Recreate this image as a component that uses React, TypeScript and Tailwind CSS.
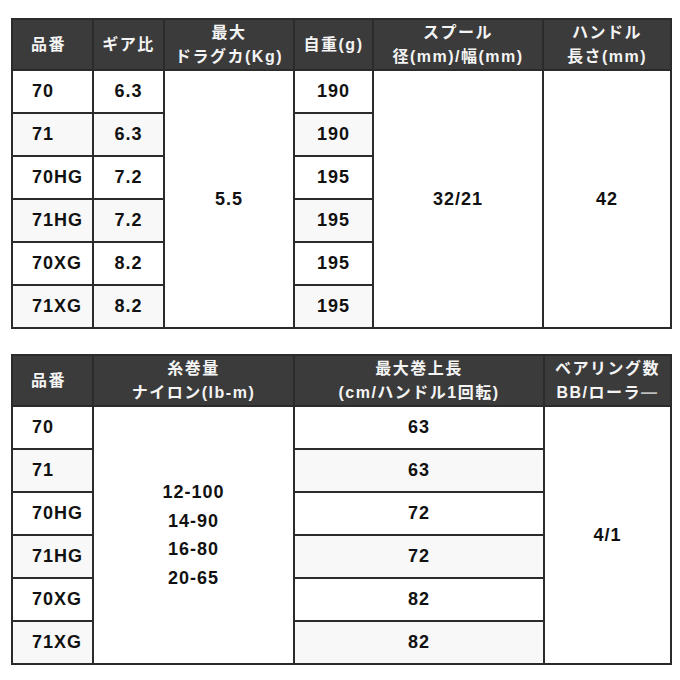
const font = { fontFamily: '"Liberation Sans", "Noto Sans CJK JP", sans-serif' };

const models = ['70', '71', '70HG', '71HG', '70XG', '71XG'];
const gear = ['6.3', '6.3', '7.2', '7.2', '8.2', '8.2'];
const weight = ['190', '190', '195', '195', '195', '195'];
const retrieve = ['63', '63', '72', '72', '82', '82'];

const th =
  'border-2 border-[#2b2b2b] bg-[#3b3b3b] text-[#f4f4f4] font-bold text-[16px] leading-[24px] tracking-[1.5px] text-center align-middle p-0';
const td =
  'border-2 border-[#2b2b2b] text-[#111] font-bold text-[18px] tracking-[1px] text-center align-middle p-0';

function rowBg(i: number) {
  return i % 2 === 1 ? 'bg-[#f8f8f8]' : 'bg-white';
}

export default function App() {
  return (
    <div className="w-[680px] h-[680px] bg-white pt-[18px] pl-[11px]" style={font}>
      <table className="border-collapse w-[659px] table-fixed">
        <colgroup>
          <col className="w-[81px]" />
          <col className="w-[71px]" />
          <col className="w-[130px]" />
          <col className="w-[79px]" />
          <col className="w-[170px]" />
          <col className="w-[128px]" />
        </colgroup>
        <thead>
          <tr className="h-[51px]">
            <th className={th + ' text-left pl-[18px]'}>品番</th>
            <th className={th}>ギア比</th>
            <th className={th}>
              最大
              <br />
              ドラグカ(Kg)
            </th>
            <th className={th}>自重(g)</th>
            <th className={th}>
              スプール
              <br />
              径(mm)/幅(mm)
            </th>
            <th className={th}>
              ハンドル
              <br />
              長さ(mm)
            </th>
          </tr>
        </thead>
        <tbody>
          {models.map((m, i) => (
            <tr key={m} className={'h-[43px] ' + rowBg(i)}>
              <td className={td + ' text-left pl-[19px]'}>{m}</td>
              <td className={td}>{gear[i]}</td>
              {i === 0 && (
                <td rowSpan={6} className={td + ' bg-white'}>
                  5.5
                </td>
              )}
              <td className={td}>{weight[i]}</td>
              {i === 0 && (
                <>
                  <td rowSpan={6} className={td + ' bg-white'}>
                    32/21
                  </td>
                  <td rowSpan={6} className={td + ' bg-white'}>
                    42
                  </td>
                </>
              )}
            </tr>
          ))}
        </tbody>
      </table>

      <table className="border-collapse w-[659px] table-fixed mt-[25px]">
        <colgroup>
          <col className="w-[81px]" />
          <col className="w-[201px]" />
          <col className="w-[250px]" />
          <col className="w-[127px]" />
        </colgroup>
        <thead>
          <tr className="h-[51px]">
            <th className={th + ' text-left pl-[18px]'}>品番</th>
            <th className={th}>
              糸巻量
              <br />
              ナイロン(lb-m)
            </th>
            <th className={th}>
              最大巻上長
              <br />
              (cm/ハンドル1回転)
            </th>
            <th className={th}>
              ベアリング数
              <br />
              BB/ローラ<span className="text-[#bdbdbd]">—</span>
            </th>
          </tr>
        </thead>
        <tbody>
          {models.map((m, i) => (
            <tr key={m} className={'h-[43px] ' + rowBg(i)}>
              <td className={td + ' text-left pl-[19px]'}>{m}</td>
              {i === 0 && (
                <td rowSpan={6} className={td + ' bg-white leading-[28.5px]'}>
                  12-100
                  <br />
                  14-90
                  <br />
                  16-80
                  <br />
                  20-65
                </td>
              )}
              <td className={td}>{retrieve[i]}</td>
              {i === 0 && (
                <td rowSpan={6} className={td + ' bg-white'}>
                  4/1
                </td>
              )}
            </tr>
          ))}
        </tbody>
      </table>
    </div>
  );
}
